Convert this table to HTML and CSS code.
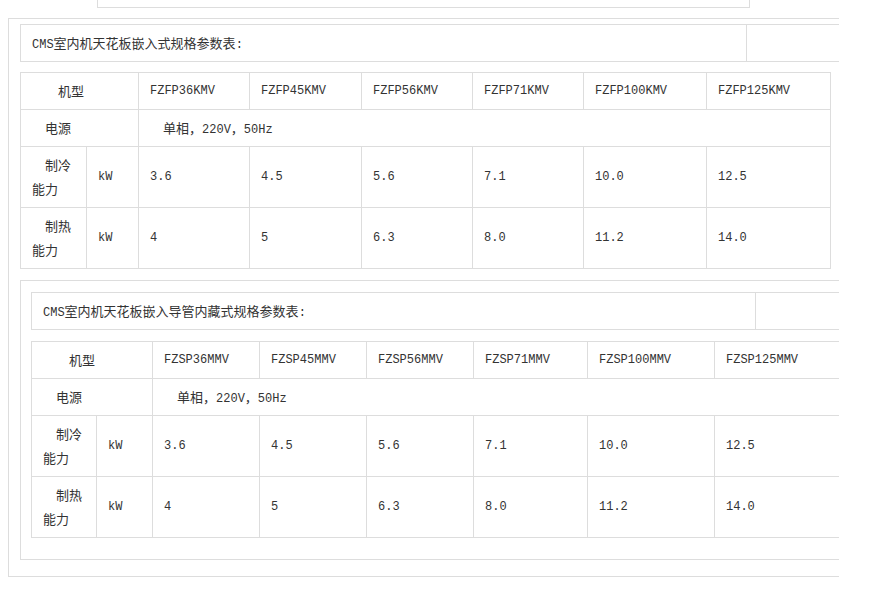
FILE: index.html
```html
<!DOCTYPE html>
<html lang="zh-CN">
<head>
<meta charset="utf-8">
<title>CMS规格参数表</title>
<link rel="stylesheet" href="styles.css">
</head>
<body>
<div class="page">
  <div class="topbox"></div>
  <div class="outer">
    <table class="title t1">
      <tr><td class="tcell"><span class="lat">CMS</span>室内机天花板嵌入式规格参数表<span class="lat">:</span></td><td class="tside"></td></tr>
    </table>
    <table class="spec">
      <colgroup>
        <col style="width:66px"><col style="width:52px"><col style="width:111px"><col style="width:112px"><col style="width:111px"><col style="width:111px"><col style="width:123px"><col style="width:124px">
      </colgroup>
      <tr><td colspan="2" class="ind2">机型</td><td class="num">FZFP36KMV</td><td class="num">FZFP45KMV</td><td class="num">FZFP56KMV</td><td class="num">FZFP71KMV</td><td class="num">FZFP100KMV</td><td class="num">FZFP125KMV</td></tr>
      <tr><td colspan="2" class="ind1">电源</td><td colspan="6" class="ind1">单相，<span class="lat">220V</span>，<span class="lat">50Hz</span></td></tr>
      <tr class="tall"><td class="ind1">制冷<br>能力</td><td class="num">kW</td><td class="num">3.6</td><td class="num">4.5</td><td class="num">5.6</td><td class="num">7.1</td><td class="num">10.0</td><td class="num">12.5</td></tr>
      <tr class="tall"><td class="ind1">制热<br>能力</td><td class="num">kW</td><td class="num">4</td><td class="num">5</td><td class="num">6.3</td><td class="num">8.0</td><td class="num">11.2</td><td class="num">14.0</td></tr>
    </table>
    <div class="section">
      <table class="title t2">
        <tr><td class="tcell"><span class="lat">CMS</span>室内机天花板嵌入导管内藏式规格参数表<span class="lat">:</span></td><td class="tside"></td></tr>
      </table>
      <table class="spec">
        <colgroup>
          <col style="width:65px"><col style="width:56px"><col style="width:107px"><col style="width:107px"><col style="width:107px"><col style="width:114px"><col style="width:127px"><col style="width:127px">
        </colgroup>
        <tr><td colspan="2" class="ind2">机型</td><td class="num">FZSP36MMV</td><td class="num">FZSP45MMV</td><td class="num">FZSP56MMV</td><td class="num">FZSP71MMV</td><td class="num">FZSP100MMV</td><td class="num">FZSP125MMV</td></tr>
        <tr><td colspan="2" class="ind1">电源</td><td colspan="6" class="ind1">单相，<span class="lat">220V</span>，<span class="lat">50Hz</span></td></tr>
        <tr class="tall"><td class="ind1">制冷<br>能力</td><td class="num">kW</td><td class="num">3.6</td><td class="num">4.5</td><td class="num">5.6</td><td class="num">7.1</td><td class="num">10.0</td><td class="num">12.5</td></tr>
        <tr class="tall"><td class="ind1">制热<br>能力</td><td class="num">kW</td><td class="num">4</td><td class="num">5</td><td class="num">6.3</td><td class="num">8.0</td><td class="num">11.2</td><td class="num">14.0</td></tr>
      </table>
    </div>
  </div>
</div>
</body>
</html>
```

FILE: styles.css
```css
html, body {
  margin: 0;
  padding: 0;
  background: #fff;
}
body {
  font-family: "Noto Sans CJK SC", sans-serif;
  font-size: 13px;
  color: #333;
}
.page {
  width: 839px;
  overflow: hidden;
}
.topbox {
  margin-left: 97px;
  width: 651px;
  height: 7px;
  border: 1px solid #ddd;
  border-top: none;
}
.outer {
  margin-top: 10px;
  margin-left: 8px;
  width: 900px;
  border: 1px solid #ddd;
  padding: 5px 0 16px 11px;
  box-sizing: border-box;
}
table {
  border-collapse: collapse;
  table-layout: fixed;
}
td {
  border: 1px solid #ddd;
  padding: 6px 11px;
  line-height: 24px;
  vertical-align: middle;
  white-space: nowrap;
  overflow: hidden;
}
.title.t1 { width: 860px; }
.title.t1 .tcell { width: 703px; }
.title.t2 { width: 860px; }
.title.t2 .tcell { width: 701px; }
.tside { width: 120px; }
.spec {
  margin-top: 10px;
  width: 810px;
}
.section .spec { margin-top: 11px; }
.tall td { height: 48px; }
.num {
  font-family: "Liberation Mono", monospace;
  font-size: 12px;
}
.lat {
  font-family: "Liberation Mono", monospace;
  font-size: 12px;
  line-height: 14px;
}
.ind1 { text-indent: 13px; }
.ind2 { text-indent: 26px; }
.section {
  margin-top: 11px;
  width: 860px;
  border: 1px solid #ddd;
  padding: 11px 0 21px 10px;
  box-sizing: border-box;
}
```
